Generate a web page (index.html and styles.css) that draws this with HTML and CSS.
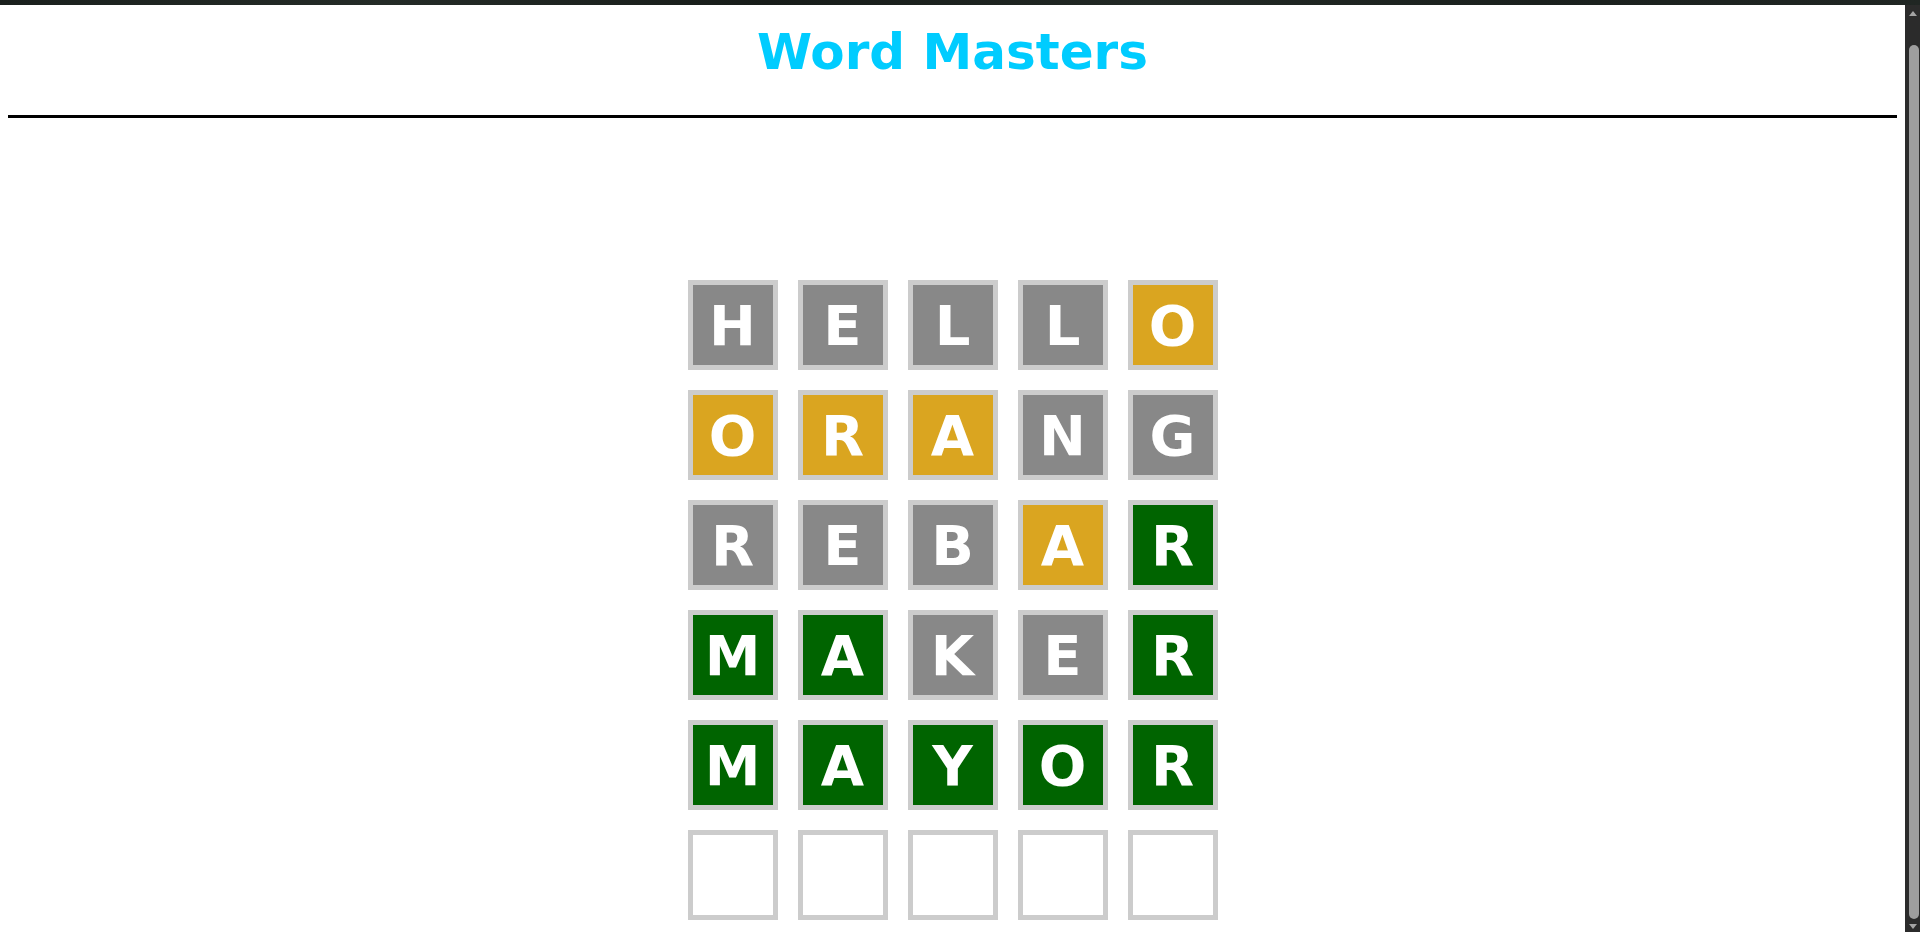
FILE: index.html
```html
<!DOCTYPE html>
<html lang="en">
<head>
<meta charset="utf-8">
<title>Word Masters</title>
<link rel="stylesheet" href="styles.css">
</head>
<body>
<div class="topband"></div>
<div class="frame">
  <div class="page">
    <header class="header">
      <h1 class="title">Word Masters</h1>
    </header>
    <hr class="rule">
    <main class="board">
      <div class="tile gray">H</div><div class="tile gray">E</div><div class="tile gray">L</div><div class="tile gray">L</div><div class="tile gold">O</div>
      <div class="tile gold">O</div><div class="tile gold">R</div><div class="tile gold">A</div><div class="tile gray">N</div><div class="tile gray">G</div>
      <div class="tile gray">R</div><div class="tile gray">E</div><div class="tile gray">B</div><div class="tile gold">A</div><div class="tile green">R</div>
      <div class="tile green">M</div><div class="tile green">A</div><div class="tile gray">K</div><div class="tile gray">E</div><div class="tile green">R</div>
      <div class="tile green">M</div><div class="tile green">A</div><div class="tile green">Y</div><div class="tile green">O</div><div class="tile green">R</div>
      <div class="tile"></div><div class="tile"></div><div class="tile"></div><div class="tile"></div><div class="tile"></div>
    </main>
  </div>
  <div class="scrollbar" aria-hidden="true">
    <div class="sb-arrow sb-up"></div>
    <div class="sb-track"><div class="sb-thumb"></div></div>
    <div class="sb-arrow sb-down"></div>
  </div>
</div>
</body>
</html>
```
FILE: styles.css
```css
html, body {
  margin: 0;
  padding: 0;
  background: #ffffff;
  height: 932px;
  overflow: hidden;
}
body {
  font-family: "DejaVu Sans", sans-serif;
  display: flex;
  flex-direction: column;
}
.topband {
  height: 5px;
  flex: none;
  background: linear-gradient(90deg, #1a201d 0%, #242b27 20%, #171c19 40%, #222925 60%, #1a201d 80%, #202623 100%);
}
.frame {
  flex: 1;
  display: flex;
  min-height: 0;
}
.page {
  flex: 1;
  min-width: 0;
  padding: 0 8px;
  overflow: hidden;
}
.header {
  padding-top: 16px;
}
.title {
  margin: 0;
  text-align: center;
  font-family: "DejaVu Sans", sans-serif;
  font-weight: bold;
  font-size: 50px;
  line-height: 62px;
  color: #00ccff;
}
.rule {
  margin: 32px 0 0;
  border: none;
  height: 3px;
  background: #000000;
}
.board {
  margin: 162px auto 0;
  display: grid;
  grid-template-columns: repeat(5, 90px);
  grid-auto-rows: 90px;
  gap: 20px;
  justify-content: center;
}
.tile {
  box-sizing: border-box;
  border: 5px solid #cccccc;
  display: flex;
  align-items: center;
  justify-content: center;
  font-family: "DejaVu Sans", sans-serif;
  font-weight: bold;
  font-size: 56px;
  color: #ffffff;
  background: #ffffff;
}
.gray { background: #888888; }
.gold { background: #daa520; }
.green { background: #006400; }

.scrollbar {
  width: 15px;
  flex: none;
  background: #2b2b2b;
  display: flex;
  flex-direction: column;
  align-items: center;
}
.sb-arrow {
  width: 0;
  height: 0;
  border-left: 4px solid transparent;
  border-right: 4px solid transparent;
  flex: none;
}
.sb-up {
  margin-top: 6px;
  border-bottom: 5px solid #a3a3a3;
}
.sb-down {
  margin: 5px 0 3px;
  border-top: 5px solid #a3a3a3;
}
.sb-track {
  flex: 1;
  width: 100%;
  display: flex;
  justify-content: center;
  padding: 29px 0 0;
  box-sizing: border-box;
}
.sb-thumb {
  width: 10px;
  margin-left: 2px;
  height: 100%;
  background: #9e9e9e;
  border-radius: 5px;
}
```
